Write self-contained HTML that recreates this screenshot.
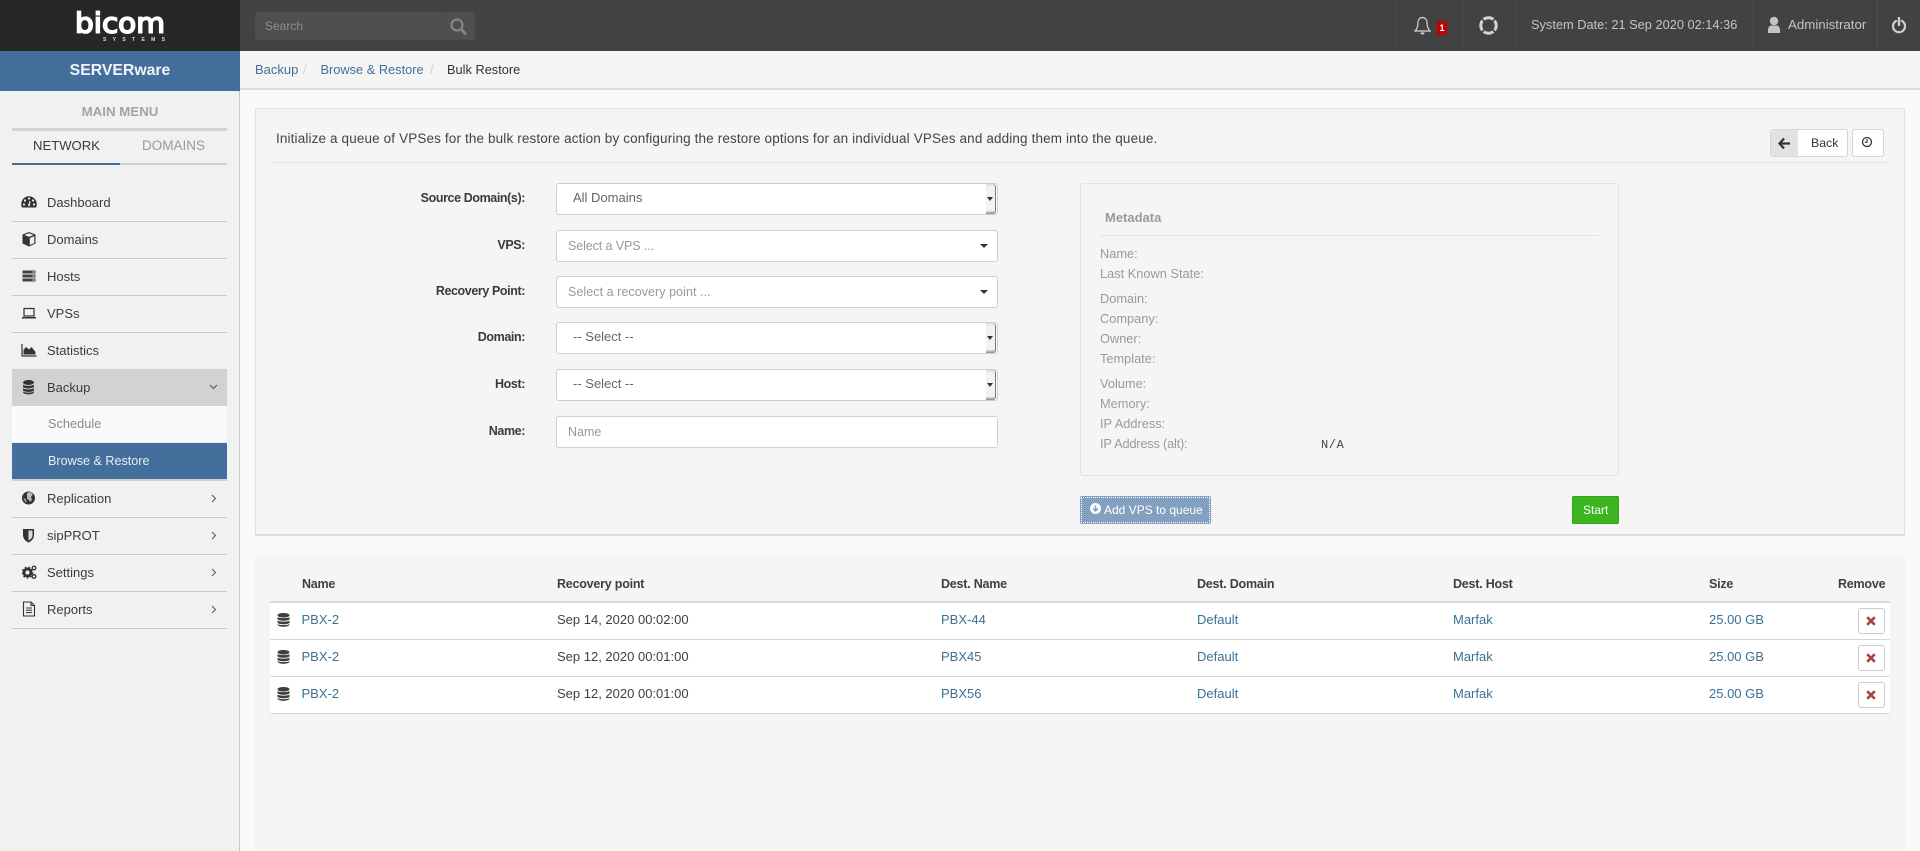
<!DOCTYPE html>
<html lang="en"><head><meta charset="utf-8"><title>Bulk Restore</title>
<style>
html,body{margin:0;padding:0}
body{width:1920px;height:851px;overflow:hidden;position:relative;background:#fafafa;font-family:"Liberation Sans",sans-serif;font-size:13px;color:#3a3a3a}
div,span,svg{position:absolute}
.t{white-space:nowrap;line-height:16px}
.b{font-weight:bold}
.lnk{color:#3a7294}
.sel{left:556px;width:440px;height:30px;background:#fff;border:1px solid #cfcfcf;border-radius:3px}
.arr{width:0;height:0;border-left:4px solid transparent;border-right:4px solid transparent;border-top:4px solid #333}
.sb{left:429px;top:0;width:9px;height:30px;background:linear-gradient(#ddd,#f2f2f2 10%,#f2f2f2 88%,#888);border-right:1px solid #777;border-radius:0 3px 3px 0}
.lab{right:1395px;font-weight:bold;text-align:right;color:#3a3a3a;font-size:12.5px;letter-spacing:-.4px}
.ph{color:#999;font-size:12.5px;left:12px;top:7px}
.val{left:16px;top:6px;color:#666;font-size:13px}
.m{left:1100px;color:#9a9a9a;font-size:12.8px}
.div{left:12px;width:215px;height:1px;background:#c9c9c9}
.mi{left:47px;color:#3b3b3b}
.ic{left:21px;width:16px;height:16px}
.x{left:1858px;width:25px;height:24px;background:#fff;border:1px solid #ccc;border-radius:3px}
.rl{left:270px;width:1620px;height:1px;background:#d6d6d6}
.th{font-weight:bold;color:#3f3f3f;font-size:12.5px;letter-spacing:-.22px}
.tv{color:#3f3f3f}
</style></head><body>

<!-- top bar -->
<div style="left:0;top:0;width:1920px;height:51px;background:#424242"></div>
<div style="left:0;top:0;width:240px;height:51px;background:#272727"></div>
<svg style="left:70px;top:5px" width="100" height="42" viewBox="0 0 100 42">
<text x="5" y="27.500" font-family="DejaVu Sans" font-size="28" fill="#fff" stroke="#fff" stroke-width="1.700" textLength="90" lengthAdjust="spacingAndGlyphs">bicom</text>
<text x="33" y="36" font-family="Liberation Sans" font-size="5" font-weight="bold" fill="#ddd" textLength="62">SYSTEMS</text>
</svg>
<div style="left:255px;top:12px;width:220px;height:28px;background:#4f4f4f;border-radius:3px"></div>
<div style="left:440px;top:12px;width:1px;height:28px;background:#4b4b4b"></div>
<div class="t" style="left:265px;top:18px;font-size:12px;color:#8f8f8f">Search</div>
<svg style="left:449px;top:17px" width="18" height="19" viewBox="0 0 18 19"><circle cx="8" cy="8" r="5.500" fill="none" stroke="#858585" stroke-width="2.200"/><path d="M12 12l5 5.500" stroke="#858585" stroke-width="2.800"/></svg>

<div style="left:1395px;top:0;width:1px;height:51px;background:#4d4d4d"></div>
<div style="left:1462px;top:0;width:1px;height:51px;background:#4d4d4d"></div>
<div style="left:1515px;top:0;width:1px;height:51px;background:#4d4d4d"></div>
<div style="left:1753px;top:0;width:1px;height:51px;background:#4d4d4d"></div>
<div style="left:1877px;top:0;width:1px;height:51px;background:#4d4d4d"></div>
<svg style="left:1414px;top:16px" width="17" height="20" viewBox="0 0 17 20"><path d="M8.500 1.500c-3 0-4.500 2.500-4.500 5 0 4.500-1 6.500-3 8.500h15c-2-2-3-4-3-8.500 0-2.500-1.500-5-4.500-5z" fill="none" stroke="#d8d8d8" stroke-width="1.200"/><path d="M6.500 16.500a2 2 0 0 0 4 0z" fill="#d8d8d8"/></svg>
<div style="left:1437px;top:21px;width:10px;height:14px;background:#c40000;border-radius:1px;color:#fff;font-size:9px;font-weight:bold;text-align:center;line-height:14px">1</div>
<svg style="left:1479px;top:16px" width="19" height="19" viewBox="0 0 19 19"><circle cx="9.500" cy="9.500" r="7.700" fill="none" stroke="#d4d4d4" stroke-width="3"/><path d="M2.500 2.500l4.300 4.300M16.500 2.500l-4.300 4.300M2.500 16.500l4.300-4.300M16.500 16.500l-4.300-4.300" stroke="#424242" stroke-width="1.700"/></svg>
<div class="t" style="left:1531px;top:17px;color:#c4c4c4;font-size:12.8px">System Date: 21 Sep 2020 02:14:36</div>
<svg style="left:1767px;top:16px" width="14" height="18" viewBox="0 0 14 18"><circle cx="7" cy="5" r="4.200" fill="#c4c4c4"/><path d="M1 17c-.5-5 1-7 3-7.500h6c2 .5 3.500 2.500 3 7.500z" fill="#c4c4c4"/></svg>
<div class="t" style="left:1788px;top:17px;color:#c4c4c4;font-size:13.300px">Administrator</div>
<svg style="left:1891px;top:17px" width="16" height="17" viewBox="0 0 16 17"><path d="M5 4a6 6 0 1 0 6 0" fill="none" stroke="#d0d0d0" stroke-width="2.200" stroke-linecap="round"/><path d="M8 1v7" stroke="#d0d0d0" stroke-width="2.400" stroke-linecap="round"/></svg>

<!-- breadcrumb -->
<div style="left:240px;top:51px;width:1680px;height:37px;background:#f5f5f5"></div>
<div style="left:240px;top:88px;width:1680px;height:2px;background:#dcdcdc"></div>
<div class="t" style="left:255px;top:62px;color:#446e9b">Backup</div>
<div class="t" style="left:303px;top:62px;color:#cfcfcf">/</div>
<div class="t" style="left:320.500px;top:62px;color:#446e9b;font-size:12.800px">Browse &amp; Restore</div>
<div class="t" style="left:430px;top:62px;color:#cfcfcf">/</div>
<div class="t" style="left:447px;top:62px;color:#333;font-size:12.800px">Bulk Restore</div>

<!-- sidebar -->
<div style="left:0;top:91px;width:239px;height:760px;background:#f1f1f1"></div>
<div style="left:239px;top:91px;width:1px;height:760px;background:#c8c8c8"></div>
<div style="left:0;top:51px;width:240px;height:40px;background:#446e9b"></div>
<div class="t b" style="left:0;top:62px;width:240px;text-align:center;color:#f0f4f8;font-size:15.800px;line-height:18px">SERVERware</div>
<div class="t b" style="left:0;top:104px;width:240px;text-align:center;color:#a3a3a3;font-size:13.300px">MAIN MENU</div>
<div style="left:12px;top:128px;width:215px;height:3px;background:#d2d2d2"></div>
<div class="t" style="left:33px;top:138px;color:#3a3a3a;font-size:13.100px">NETWORK</div>
<div class="t" style="left:142px;top:138px;color:#999;font-size:13.500px">DOMAINS</div>
<div style="left:12px;top:163px;width:108px;height:2px;background:#446e9b"></div>
<div style="left:120px;top:163px;width:107px;height:2px;background:#d2d2d2"></div>

<div class="div" style="top:221px"></div>
<div class="div" style="top:258px"></div>
<div class="div" style="top:295px"></div>
<div class="div" style="top:332px"></div>
<div style="left:12px;top:369px;width:215px;height:37px;background:#d2d2d2"></div>
<div style="left:12px;top:406px;width:215px;height:36px;background:#fafafa"></div>
<div style="left:12px;top:443px;width:215px;height:36px;background:#446e9b"></div>
<div style="left:12px;top:479px;width:215px;height:2px;background:#cfcfcf"></div>
<div class="div" style="top:517px"></div>
<div class="div" style="top:554px"></div>
<div class="div" style="top:591px"></div>
<div class="div" style="top:628px"></div>

<div class="t mi" style="top:195px">Dashboard</div>
<div class="t mi" style="top:232px">Domains</div>
<div class="t mi" style="top:269px">Hosts</div>
<div class="t mi" style="top:306px">VPSs</div>
<div class="t mi" style="top:343px">Statistics</div>
<div class="t mi" style="top:380px">Backup</div>
<div class="t" style="left:48px;top:416px;color:#8a8a8a;font-size:12.800px">Schedule</div>
<div class="t" style="left:48px;top:453px;color:#e8eef4;font-size:12.600px">Browse &amp; Restore</div>
<div class="t mi" style="top:491px">Replication</div>
<div class="t mi" style="top:528px">sipPROT</div>
<div class="t mi" style="top:565px">Settings</div>
<div class="t mi" style="top:602px">Reports</div>

<!-- sidebar icons -->
<svg class="ic" style="top:194px" viewBox="0 0 16 16"><path d="M1 13.500C.2 12 .3 10.500.3 10A7.500 7.500 0 0 1 15.700 10c0 .5.1 2-.7 3.500z" fill="#333"/><g fill="#f1f1f1"><circle cx="4" cy="6.500" r="1.100"/><circle cx="8" cy="4.500" r="1.100"/><circle cx="12" cy="6.500" r="1.100"/><circle cx="3" cy="10.500" r="1.100"/><circle cx="13" cy="10.500" r="1.100"/><path d="M7 12l1.500-5 1 .3-.8 5z"/></g></svg>
<svg class="ic" style="top:231px" viewBox="0 0 16 16"><path d="M8 1l6.500 2.500v9L8 15.500 1.500 12.500v-9z" fill="#333"/><path d="M8 2.300L12.700 4 8 5.800 3.300 4zM8.800 7v7l4.500-2V5.200z" fill="#f1f1f1"/></svg>
<svg class="ic" style="top:268px" viewBox="0 0 16 16"><g fill="#444"><rect x="1.500" y="2.500" width="13" height="3"/><rect x="1.500" y="6.500" width="13" height="3"/><rect x="1.500" y="10.500" width="13" height="3"/></g><g fill="#f1f1f1"><rect x="11.500" y="3.500" width="2" height="1"/><rect x="11.500" y="7.500" width="2" height="1"/><rect x="11.500" y="11.500" width="2" height="1"/></g></svg>
<svg class="ic" style="top:305px" viewBox="0 0 16 16"><rect x="3" y="3.500" width="10" height="7.500" fill="none" stroke="#333" stroke-width="1.200"/><rect x="1" y="12" width="14" height="1.500" fill="#333"/></svg>
<svg class="ic" style="top:342px" viewBox="0 0 16 16"><path d="M1 2v12h14.500" fill="none" stroke="#333" stroke-width="1.200"/><path d="M2.500 12.500V8l2.500-3 3 2.500L10.500 5l4 5v2.500z" fill="#333"/></svg>
<svg class="ic" style="top:379px" viewBox="0 0 16 16"><g fill="#333"><ellipse cx="7.500" cy="3.500" rx="5.500" ry="2.500"/><path d="M2 5.500c1 1.800 10 1.800 11 0v2.300c-1 2.200-10 2.200-11 0zM2 9c1 1.800 10 1.800 11 0v2.300c-1 2.200-10 2.200-11 0zM2 12.300c1 1.800 10 1.800 11 0v1c-1 2.800-10 2.800-11 0z"/></g></svg>
<svg class="ic" style="top:490px" viewBox="0 0 16 16"><circle cx="7.500" cy="8" r="6.500" fill="#333"/><path d="M6 3l3-1 3 2-2 3 1 3-2 2-1-2-2-1zM2.500 8l2 1 1 3-1 .5z" fill="#bbb"/></svg>
<svg class="ic" style="top:527px" viewBox="0 0 16 16"><path d="M2 2h11v6c0 4-3 6.500-5.500 7.500C5 14.500 2 12 2 8z" fill="#333"/><path d="M7.500 3.500h4V8c0 2.800-2 4.500-4 5.500z" fill="#ddd"/></svg>
<svg class="ic" style="top:564px;left:22px;width:15px" viewBox="0 0 15 16"><circle cx="5.500" cy="8.500" r="3.500" fill="none" stroke="#333" stroke-width="2.800"/><circle cx="5.500" cy="8.500" r="5.200" fill="none" stroke="#333" stroke-width="1.500" stroke-dasharray="1.800 1.800"/><circle cx="12" cy="4" r="1.800" fill="none" stroke="#333" stroke-width="1.300"/><circle cx="12" cy="12.500" r="1.800" fill="none" stroke="#333" stroke-width="1.300"/></svg>
<svg class="ic" style="top:601px" viewBox="0 0 16 16"><path d="M2.500 1h7.500l3.500 3.500V15H2.500zM10 1v3.500h3.500" fill="none" stroke="#333" stroke-width="1.100"/><path d="M5 7h6M5 9.300h6M5 11.600h6" stroke="#333" stroke-width="1"/></svg>

<svg style="left:209px;top:384px" width="9" height="6" viewBox="0 0 9 6"><path d="M1 1l3.500 3.500L8 1" fill="none" stroke="#555" stroke-width="1"/></svg>
<svg style="left:211px;top:494px" width="6" height="9" viewBox="0 0 6 9"><path d="M1 1l3.500 3.500L1 8" fill="none" stroke="#555" stroke-width="1"/></svg>
<svg style="left:211px;top:531px" width="6" height="9" viewBox="0 0 6 9"><path d="M1 1l3.500 3.500L1 8" fill="none" stroke="#555" stroke-width="1"/></svg>
<svg style="left:211px;top:568px" width="6" height="9" viewBox="0 0 6 9"><path d="M1 1l3.500 3.500L1 8" fill="none" stroke="#555" stroke-width="1"/></svg>
<svg style="left:211px;top:605px" width="6" height="9" viewBox="0 0 6 9"><path d="M1 1l3.500 3.500L1 8" fill="none" stroke="#555" stroke-width="1"/></svg>

<!-- main panel -->
<div style="left:255px;top:108px;width:1648px;height:425px;background:#f5f5f5;border:1px solid #e2e2e2;border-bottom:2px solid #dcdcdc"></div>
<div class="t" style="left:276px;top:131px;font-size:13.500px;color:#444;letter-spacing:.136px">Initialize a queue of VPSes for the bulk restore action by configuring the restore options for an individual VPSes and adding them into the queue.</div>
<div style="left:271px;top:162px;width:1617px;height:1px;background:#e4e4e4"></div>

<div style="left:1770px;top:129px;width:76px;height:26px;background:#fff;border:1px solid #d5d5d5;border-radius:3px"></div>
<div style="left:1771px;top:130px;width:27px;height:26px;background:#e2e2e2;border-radius:3px 0 0 3px"></div>
<svg style="left:1778px;top:137px" width="13" height="13" viewBox="0 0 13 13"><path d="M6 1.500L1.500 6.500 6 11.500M2 6.500h10" fill="none" stroke="#333" stroke-width="2.300"/></svg>
<div class="t" style="left:1811px;top:135px;font-size:12.300px;color:#333">Back</div>
<div style="left:1852px;top:129px;width:30px;height:26px;background:#fff;border:1px solid #d5d5d5;border-radius:3px"></div>
<svg style="left:1861px;top:136px" width="12" height="12" viewBox="0 0 12 12"><circle cx="6" cy="6" r="4.500" fill="none" stroke="#333" stroke-width="1.300"/><path d="M6 3v3.300H3.800" fill="none" stroke="#333" stroke-width="1.100"/></svg>

<!-- form -->
<div class="t lab" style="top:190px">Source Domain(s):</div>
<div class="t lab" style="top:237px">VPS:</div>
<div class="t lab" style="top:283px">Recovery Point:</div>
<div class="t lab" style="top:329px">Domain:</div>
<div class="t lab" style="top:376px">Host:</div>
<div class="t lab" style="top:423px">Name:</div>

<div class="sel" style="top:183px"><div class="sb"></div><div class="arr" style="left:430px;top:13px;border-left-width:3px;border-right-width:3px"></div><div class="t val">All Domains</div></div>
<div class="sel" style="top:230px"><div class="arr" style="left:423px;top:13px"></div><div class="t ph" style="letter-spacing:-.1px;left:11px">Select a VPS ...</div></div>
<div class="sel" style="top:276px"><div class="arr" style="left:423px;top:13px"></div><div class="t ph" style="left:11px;letter-spacing:.06px">Select a recovery point ...</div></div>
<div class="sel" style="top:322px"><div class="sb"></div><div class="arr" style="left:430px;top:13px;border-left-width:3px;border-right-width:3px"></div><div class="t val">-- Select --</div></div>
<div class="sel" style="top:369px"><div class="sb"></div><div class="arr" style="left:430px;top:13px;border-left-width:3px;border-right-width:3px"></div><div class="t val">-- Select --</div></div>
<div class="sel" style="top:416px"><div class="t ph" style="left:11px">Name</div></div>

<!-- metadata -->
<div style="left:1080px;top:183px;width:537px;height:291px;border:1px solid #e2e2e2;border-radius:3px"></div>
<div class="t b" style="left:1105px;top:210px;color:#999;font-size:13px">Metadata</div>
<div style="left:1100px;top:235px;width:499px;height:1px;background:#e4e4e4"></div>
<div class="t m" style="top:246px">Name:</div>
<div class="t m" style="top:266px">Last Known State:</div>
<div class="t m" style="top:291px">Domain:</div>
<div class="t m" style="top:311px">Company:</div>
<div class="t m" style="top:331px">Owner:</div>
<div class="t m" style="top:351px">Template:</div>
<div class="t m" style="top:376px">Volume:</div>
<div class="t m" style="top:396px">Memory:</div>
<div class="t m" style="top:416px">IP Address:</div>
<div class="t m" style="top:436px;letter-spacing:-.2px">IP Address (alt):</div>
<div class="t" style="left:1321px;top:437px;font-family:'Liberation Mono',monospace;font-size:12px;color:#444;letter-spacing:.6px">N/A</div>

<div style="left:1080px;top:496px;width:131px;height:28px;background:#83a0c0;border-radius:2px"></div>
<div style="left:1081px;top:497px;width:127px;height:24px;border:1px dotted #fff"></div>
<svg style="left:1090px;top:503px" width="11" height="11" viewBox="0 0 11 11"><circle cx="5.500" cy="5.500" r="5.500" fill="#fff"/><path d="M5.500 2.500v5M3 5.500l2.500 2.500L8 5.500" fill="none" stroke="#83a0c0" stroke-width="1.500"/></svg>
<div class="t" style="left:1104px;top:502px;color:#fff;font-size:12px">Add VPS to queue</div>
<div style="left:1572px;top:496px;width:47px;height:28px;background:#3cb521;border-radius:2px;box-shadow:inset 0 0 0 1px #35a21d"></div>
<div class="t" style="left:1583px;top:502px;color:#fff;font-size:12px">Start</div>

<!-- table -->
<div style="left:255px;top:556px;width:1650px;height:295px;background:#f5f5f5"></div>
<div style="left:270px;top:603px;width:1620px;height:110px;background:#fff"></div>
<div style="left:270px;top:601px;width:1620px;height:2px;background:#dcdcdc"></div>
<div class="rl" style="top:639px"></div>
<div class="rl" style="top:676px"></div>
<div class="rl" style="top:713px"></div>

<div class="t th" style="left:302px;top:576px">Name</div>
<div class="t th" style="left:557px;top:576px">Recovery point</div>
<div class="t th" style="left:941px;top:576px">Dest. Name</div>
<div class="t th" style="left:1197px;top:576px">Dest. Domain</div>
<div class="t th" style="left:1453px;top:576px">Dest. Host</div>
<div class="t th" style="left:1709px;top:576px">Size</div>
<div class="t th" style="left:1838px;top:576px">Remove</div>

<svg style="left:277px;top:613px" width="13" height="14" viewBox="0 0 13 14"><path d="M6.500 0C3 0 .5 1 .5 2.300S3 4.600 6.500 4.600s6-1 6-2.300S10 0 6.500 0zM.5 4c1 1.500 11 1.500 12 0v2.200c-1 2-11 2-12 0zM.5 7.500c1 1.500 11 1.500 12 0v2.200c-1 2-11 2-12 0zM.5 11c1 1.500 11 1.500 12 0v.8c-1 2.700-11 2.700-12 0z" fill="#3f3f3f"/></svg>
<svg style="left:277px;top:650px" width="13" height="14" viewBox="0 0 13 14"><path d="M6.500 0C3 0 .5 1 .5 2.300S3 4.600 6.500 4.600s6-1 6-2.300S10 0 6.500 0zM.5 4c1 1.500 11 1.500 12 0v2.200c-1 2-11 2-12 0zM.5 7.500c1 1.500 11 1.500 12 0v2.200c-1 2-11 2-12 0zM.5 11c1 1.500 11 1.500 12 0v.8c-1 2.700-11 2.700-12 0z" fill="#3f3f3f"/></svg>
<svg style="left:277px;top:687px" width="13" height="14" viewBox="0 0 13 14"><path d="M6.500 0C3 0 .5 1 .5 2.300S3 4.600 6.500 4.600s6-1 6-2.300S10 0 6.500 0zM.5 4c1 1.500 11 1.500 12 0v2.200c-1 2-11 2-12 0zM.5 7.500c1 1.500 11 1.500 12 0v2.200c-1 2-11 2-12 0zM.5 11c1 1.500 11 1.500 12 0v.8c-1 2.700-11 2.700-12 0z" fill="#3f3f3f"/></svg>

<div class="t lnk" style="left:301.500px;top:611.500px">PBX-2</div>
<div class="t tv" style="left:557px;top:611.500px">Sep 14, 2020 00:02:00</div>
<div class="t lnk" style="left:941px;top:611.500px">PBX-44</div>
<div class="t lnk" style="left:1197px;top:611.500px">Default</div>
<div class="t lnk" style="left:1453px;top:611.500px">Marfak</div>
<div class="t lnk" style="left:1709px;top:611.500px">25.00 GB</div>

<div class="t lnk" style="left:301.500px;top:648.500px">PBX-2</div>
<div class="t tv" style="left:557px;top:648.500px">Sep 12, 2020 00:01:00</div>
<div class="t lnk" style="left:941px;top:648.500px">PBX45</div>
<div class="t lnk" style="left:1197px;top:648.500px">Default</div>
<div class="t lnk" style="left:1453px;top:648.500px">Marfak</div>
<div class="t lnk" style="left:1709px;top:648.500px">25.00 GB</div>

<div class="t lnk" style="left:301.500px;top:685.500px">PBX-2</div>
<div class="t tv" style="left:557px;top:685.500px">Sep 12, 2020 00:01:00</div>
<div class="t lnk" style="left:941px;top:685.500px">PBX56</div>
<div class="t lnk" style="left:1197px;top:685.500px">Default</div>
<div class="t lnk" style="left:1453px;top:685.500px">Marfak</div>
<div class="t lnk" style="left:1709px;top:685.500px">25.00 GB</div>

<div class="x" style="top:608px"><svg style="left:7px;top:7px" width="10" height="10" viewBox="0 0 10 10"><path d="M1.200 1.200l7.600 7.600M8.800 1.200L1.200 8.800" stroke="#a94442" stroke-width="2.600"/></svg></div>
<div class="x" style="top:645px"><svg style="left:7px;top:7px" width="10" height="10" viewBox="0 0 10 10"><path d="M1.200 1.200l7.600 7.600M8.800 1.200L1.200 8.800" stroke="#a94442" stroke-width="2.600"/></svg></div>
<div class="x" style="top:682px"><svg style="left:7px;top:7px" width="10" height="10" viewBox="0 0 10 10"><path d="M1.200 1.200l7.600 7.600M8.800 1.200L1.200 8.800" stroke="#a94442" stroke-width="2.600"/></svg></div>

</body></html>
